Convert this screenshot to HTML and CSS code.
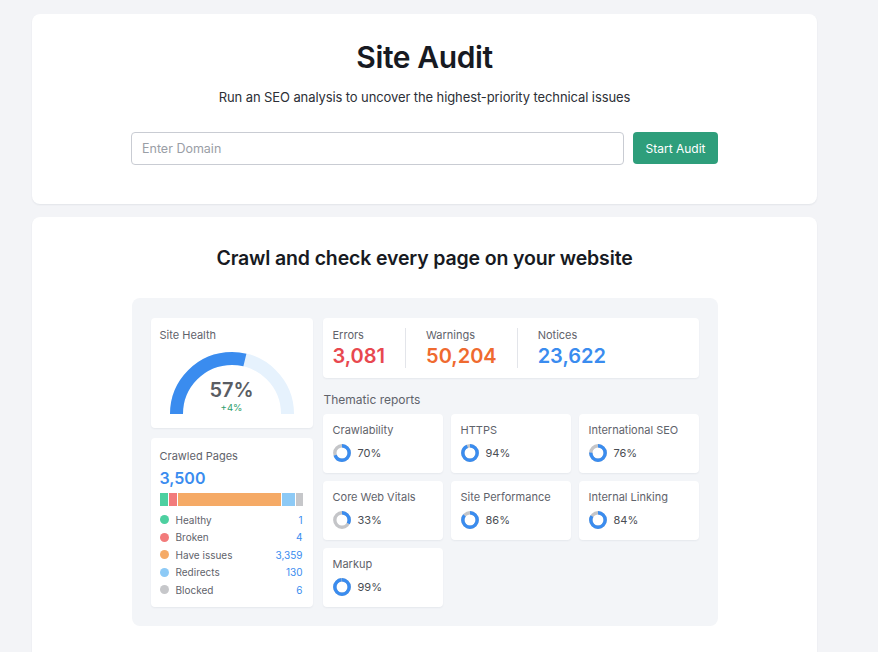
FILE: index.html
```html
<!DOCTYPE html>
<html lang="en">
<head>
<meta charset="utf-8">
<title>Site Audit</title>
<link rel="stylesheet" href="styles.css">
</head>
<body>
<main class="page">
  <section class="card hero">
    <h1 class="hero-title">Site Audit</h1>
    <p class="hero-sub">Run an SEO analysis to uncover the highest-priority technical issues</p>
    <form class="audit-form">
      <input class="domain-input" type="text" placeholder="Enter Domain">
      <button class="start-btn" type="button">Start Audit</button>
    </form>
  </section>

  <section class="card preview">
    <h2 class="preview-title">Crawl and check every page on your website</h2>
    <div class="panel">
      <div class="col-left">
        <div class="tile health">
          <div class="tile-label">Site Health</div>
          <div class="gauge">
            <svg class="gauge-svg" width="124" height="62" viewBox="0 0 124 62">
              <path d="M 6.5 62 A 55.5 55.5 0 0 1 117.5 62" fill="none" stroke="#e6f2fd" stroke-width="13"/>
              <path d="M 6.5 62 A 55.5 55.5 0 0 1 117.5 62" fill="none" stroke="#3a8cef" stroke-width="13" pathLength="100" stroke-dasharray="57.5 100"/>
            </svg>
            <div class="gauge-text">
              <div class="gauge-value">57%</div>
              <div class="gauge-delta">+4%</div>
            </div>
          </div>
        </div>
        <div class="tile crawled">
          <div class="tile-label">Crawled Pages</div>
          <div class="crawled-total">3,500</div>
          <div class="stack-bar">
            <span class="seg c-healthy" style="flex-basis:8px"></span>
            <span class="seg c-broken" style="flex-basis:8px"></span>
            <span class="seg c-issues" style="flex-basis:103px"></span>
            <span class="seg c-redirects" style="flex-basis:13px"></span>
            <span class="seg c-blocked" style="flex-basis:7px"></span>
          </div>
          <ul class="legend">
            <li class="legend-row"><span class="dot c-healthy"></span><span class="legend-name">Healthy</span><span class="legend-val">1</span></li>
            <li class="legend-row"><span class="dot c-broken"></span><span class="legend-name">Broken</span><span class="legend-val">4</span></li>
            <li class="legend-row"><span class="dot c-issues"></span><span class="legend-name">Have issues</span><span class="legend-val">3,359</span></li>
            <li class="legend-row"><span class="dot c-redirects"></span><span class="legend-name">Redirects</span><span class="legend-val">130</span></li>
            <li class="legend-row"><span class="dot c-blocked"></span><span class="legend-name">Blocked</span><span class="legend-val">6</span></li>
          </ul>
        </div>
      </div>

      <div class="col-right">
        <div class="tile counts">
          <div class="count">
            <div class="tile-label">Errors</div>
            <div class="count-val errors">3,081</div>
          </div>
          <div class="count">
            <div class="tile-label">Warnings</div>
            <div class="count-val warnings">50,204</div>
          </div>
          <div class="count">
            <div class="tile-label">Notices</div>
            <div class="count-val notices">23,622</div>
          </div>
        </div>
        <div class="section-label">Thematic reports</div>
        <div class="reports">
          <div class="tile report">
            <div class="tile-label">Crawlability</div>
            <div class="report-score"><svg class="donut" width="18" height="18" viewBox="0 0 18 18"><circle cx="9" cy="9" r="7.2" class="donut-bg"/><circle cx="9" cy="9" r="7.2" class="donut-fg" pathLength="100" stroke-dasharray="70 100"/></svg><span>70%</span></div>
          </div>
          <div class="tile report">
            <div class="tile-label">HTTPS</div>
            <div class="report-score"><svg class="donut" width="18" height="18" viewBox="0 0 18 18"><circle cx="9" cy="9" r="7.2" class="donut-bg"/><circle cx="9" cy="9" r="7.2" class="donut-fg" pathLength="100" stroke-dasharray="94 100"/></svg><span>94%</span></div>
          </div>
          <div class="tile report">
            <div class="tile-label">International SEO</div>
            <div class="report-score"><svg class="donut" width="18" height="18" viewBox="0 0 18 18"><circle cx="9" cy="9" r="7.2" class="donut-bg"/><circle cx="9" cy="9" r="7.2" class="donut-fg" pathLength="100" stroke-dasharray="76 100"/></svg><span>76%</span></div>
          </div>
          <div class="tile report">
            <div class="tile-label">Core Web Vitals</div>
            <div class="report-score"><svg class="donut" width="18" height="18" viewBox="0 0 18 18"><circle cx="9" cy="9" r="7.2" class="donut-bg"/><circle cx="9" cy="9" r="7.2" class="donut-fg" pathLength="100" stroke-dasharray="33 100"/></svg><span>33%</span></div>
          </div>
          <div class="tile report">
            <div class="tile-label">Site Performance</div>
            <div class="report-score"><svg class="donut" width="18" height="18" viewBox="0 0 18 18"><circle cx="9" cy="9" r="7.2" class="donut-bg"/><circle cx="9" cy="9" r="7.2" class="donut-fg" pathLength="100" stroke-dasharray="86 100"/></svg><span>86%</span></div>
          </div>
          <div class="tile report">
            <div class="tile-label">Internal Linking</div>
            <div class="report-score"><svg class="donut" width="18" height="18" viewBox="0 0 18 18"><circle cx="9" cy="9" r="7.2" class="donut-bg"/><circle cx="9" cy="9" r="7.2" class="donut-fg" pathLength="100" stroke-dasharray="84 100"/></svg><span>84%</span></div>
          </div>
          <div class="tile report">
            <div class="tile-label">Markup</div>
            <div class="report-score"><svg class="donut" width="18" height="18" viewBox="0 0 18 18"><circle cx="9" cy="9" r="7.2" class="donut-bg"/><circle cx="9" cy="9" r="7.2" class="donut-fg" pathLength="100" stroke-dasharray="99 100"/></svg><span>99%</span></div>
          </div>
        </div>
      </div>
    </div>
  </section>
</main>
</body>
</html>
```

FILE: styles.css
```css
* { box-sizing: border-box; }

html, body {
  margin: 0;
  padding: 0;
  height: 100%;
  overflow: hidden;
}

body {
  background: #f3f4f7;
  font-family: Inter, "Noto Sans", "Liberation Sans", sans-serif;
  color: #222;
}

.page {
  width: 785px;
  margin-left: 32px;
  padding-top: 14px;
  display: flex;
  flex-direction: column;
  gap: 13px;
}

.card {
  background: #fff;
  border-radius: 8px;
  box-shadow: 0 1px 2px rgba(20, 30, 60, 0.07);
}

/* hero */
.hero {
  padding: 25px 0 39px;
  display: flex;
  flex-direction: column;
  align-items: center;
}

.hero-title {
  margin: 0;
  font-size: 30px;
  line-height: 36px;
  font-weight: 600;
  letter-spacing: -0.4px;
  color: #171a22;
}

.hero-sub {
  margin: 13px 0 0;
  font-size: 13px;
  line-height: 18px;
  color: #2c2f36;
  letter-spacing: -0.1px;
}

.audit-form {
  margin: 26px 0 0;
  display: flex;
  gap: 9px;
  align-items: flex-start;
}

.domain-input {
  width: 493px;
  height: 33px;
  border: 1px solid #c9ccd3;
  border-radius: 4px;
  padding: 0 10px;
  font-family: inherit;
  font-size: 12.5px;
  color: #333;
  background: #fff;
  outline: none;
}

.domain-input::placeholder { color: #9a9ea6; }

.start-btn {
  width: 85px;
  height: 32px;
  border: none;
  border-radius: 4px;
  background: #2e9e7b;
  color: #fff;
  font-family: inherit;
  font-size: 12px;
  padding: 0;
}

/* preview */
.preview {
  padding: 28px 0 40px;
  display: flex;
  flex-direction: column;
  align-items: center;
}

.preview-title {
  margin: 0;
  font-size: 19.5px;
  line-height: 26px;
  font-weight: 600;
  color: #171a22;
  letter-spacing: -0.15px;
}

.panel {
  margin-top: 27px;
  width: 586px;
  background: #f3f5f8;
  border-radius: 8px;
  padding: 20px 19px 19px;
  display: flex;
  gap: 10px;
}

.col-left {
  width: 162px;
  display: flex;
  flex-direction: column;
  gap: 10px;
}

.col-right {
  width: 376px;
  display: flex;
  flex-direction: column;
}

.tile {
  background: #fff;
  border-radius: 4px;
  box-shadow: 0 1px 2px rgba(20, 30, 60, 0.06);
}

.tile-label {
  font-size: 11px;
  line-height: 14px;
  color: #5f636b;
}

/* site health */
.health {
  height: 110px;
  padding: 10px 9px 0;
  display: flex;
  flex-direction: column;
}

.gauge {
  position: relative;
  width: 124px;
  height: 62px;
  margin: 10px auto 0;
}

.gauge-svg { display: block; }

.gauge-text {
  position: absolute;
  left: 0;
  right: 0;
  top: 26px;
  text-align: center;
}

.gauge-value {
  font-size: 20px;
  line-height: 24px;
  font-weight: 600;
  color: #5a5d63;
}

.gauge-delta {
  font-size: 9.5px;
  line-height: 12px;
  color: #2c9e6c;
}

/* crawled */
.crawled {
  height: 169px;
  padding: 11px 10px 0 9px;
}

.crawled-total {
  margin-top: 5px;
  font-size: 16px;
  line-height: 20px;
  font-weight: 600;
  color: #3a8cef;
}

.stack-bar {
  margin-top: 5px;
  height: 13px;
  display: flex;
  gap: 1px;
}

.seg { flex-grow: 0; flex-shrink: 0; }

.c-healthy { background: #4dd0a0; }
.c-broken { background: #f27b7b; }
.c-issues { background: #f5aa66; }
.c-redirects { background: #8dcaf6; }
.c-blocked { background: #c6c7ca; }

.legend {
  list-style: none;
  margin: 5px 0 0;
  padding: 0;
}

.legend-row {
  height: 17.5px;
  display: flex;
  align-items: center;
  font-size: 10px;
}

.dot {
  width: 9px;
  height: 9px;
  border-radius: 50%;
  margin-right: 7px;
}

.legend-name {
  flex: 1;
  color: #5f636b;
}

.legend-val {
  color: #3a8cef;
}

/* counts */
.counts {
  height: 60px;
  padding: 10px 10px 0;
  display: flex;
  align-items: flex-start;
}

.count {
  padding: 0 20px;
  border-left: 1px solid #e3e5ea;
  height: 40px;
}

.count:first-child {
  padding-left: 0;
  border-left: none;
}

.count .tile-label { line-height: 14px; }

.count-val {
  margin-top: 1px;
  font-size: 20px;
  line-height: 26px;
  font-weight: 600;
}

.errors { color: #e8484f; }
.warnings { color: #ef6a30; }
.notices { color: #3a8cef; }

.section-label {
  margin: 15px 0 7px 1px;
  font-size: 12px;
  line-height: 14px;
  color: #5f636b;
}

.reports {
  display: grid;
  grid-template-columns: repeat(3, 120px);
  grid-auto-rows: 59px;
  gap: 8px;
}

.report {
  padding: 9px 10px 0;
}

.report-score {
  margin-top: 7px;
  display: flex;
  align-items: center;
  gap: 7px;
  font-size: 11px;
  color: #4a4d53;
}

.donut {
  display: block;
  transform: rotate(-90deg);
}

.donut-bg {
  fill: none;
  stroke: #c4c5c8;
  stroke-width: 3.4;
}

.donut-fg {
  fill: none;
  stroke: #3a8cef;
  stroke-width: 3.4;
}
```
